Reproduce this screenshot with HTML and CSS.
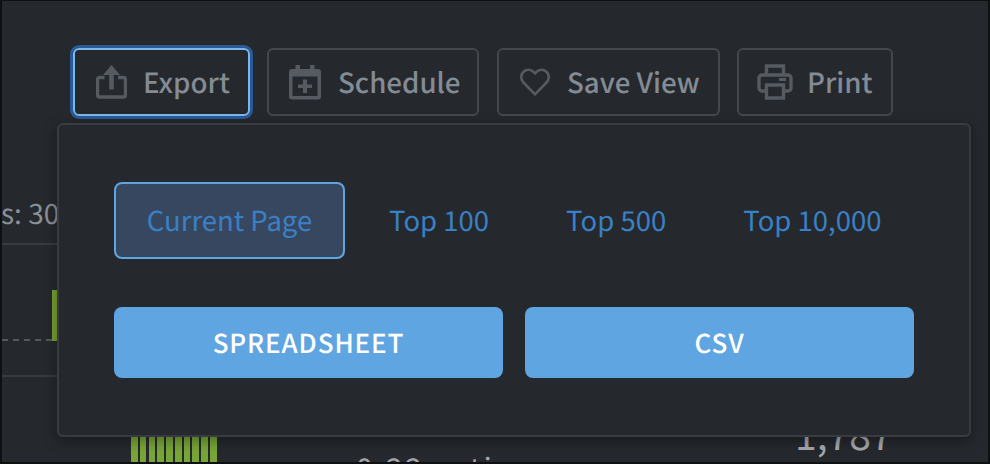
FILE: index.html
```html
<!DOCTYPE html>
<html lang="en">
<head>
<meta charset="utf-8">
<title>Export</title>
<link rel="stylesheet" href="styles.css">
</head>
<body>
<div class="frame">
  <div class="behind">
    <span class="stat">s: 30</span>
    <div class="rule rule-a"></div>
    <div class="rule rule-b"></div>
    <div class="dash"></div>
    <div class="bar-one"></div>
    <div class="bars"><i></i><i></i><i></i><i></i><i></i><i></i><i></i><i></i><i></i><i></i></div>
    <span class="frag">0.22 ratio</span>
    <span class="total">1,787</span>
  </div>
  <div class="toolbar">
    <button class="tool tool-export">
      <svg class="icon" width="31" height="34" viewBox="0 0 31 34"><path d="M8.500 12.500H3.500a2 2 0 0 0-2 2V30a2 2 0 0 0 2 2h24a2 2 0 0 0 2-2V14.500a2 2 0 0 0-2-2H22" fill="none" stroke="currentColor" stroke-width="3.400"/><path d="M15.500 0 24 10H17.800V24.500H13.200V10H7Z" fill="currentColor"/></svg>
      <span>Export</span>
    </button>
    <button class="tool tool-schedule">
      <svg class="icon" width="32" height="35" viewBox="0 0 32 35"><path d="M3 4H6.500V0H11V4H21V0H25.500V4H29A3 3 0 0 1 32 7V31.500A3 3 0 0 1 29 34.500H3A3 3 0 0 1 0 31.500V7A3 3 0 0 1 3 4ZM3.500 11.500V31H28.500V11.500Z" fill="currentColor" fill-rule="evenodd"/><path d="M14 14.500H18V19.500H23V23H18V28H14V23H9V19.500H14Z" fill="currentColor"/></svg>
      <span>Schedule</span>
    </button>
    <button class="tool tool-save">
      <svg class="icon" width="30" height="28" viewBox="0 0 30 28"><path d="M15 26.300 3.500 14.500C0.500 11.500 0.500 6.500 3.500 3.800 6.500 1 11 1.200 13.500 3.800L15 5.500 16.500 3.800C19 1.200 23.500 1 26.500 3.800 29.500 6.500 29.500 11.500 26.500 14.500Z" fill="none" stroke="currentColor" stroke-width="2.600" stroke-linejoin="round"/></svg>
      <span>Save View</span>
    </button>
    <button class="tool tool-print">
      <svg class="icon" width="36" height="36" viewBox="0 0 36 36"><path d="M9.500 11V2H26.500V11M9.500 27H5A3 3 0 0 1 2 24V14A3 3 0 0 1 5 11H31A3 3 0 0 1 34 14V24A3 3 0 0 1 31 27H26.500M9.500 21H26.500V34H9.500Z" fill="none" stroke="currentColor" stroke-width="3.400"/><rect x="22" y="14" width="7" height="3" fill="currentColor"/></svg>
      <span>Print</span>
    </button>
  </div>
  <div class="popover">
    <div class="ranges">
      <button class="range range-current">Current Page</button>
      <button class="range range-100">Top 100</button>
      <button class="range range-500">Top 500</button>
      <button class="range range-10k">Top 10,000</button>
    </div>
    <div class="actions">
      <button class="action">SPREADSHEET</button>
      <button class="action">CSV</button>
    </div>
  </div>
</div>
</body>
</html>
```
FILE: styles.css
```css
* { box-sizing: border-box; }
html, body { margin: 0; padding: 0; }
body {
  width: 990px;
  height: 464px;
  background: #0f1012;
  overflow: hidden;
  font-family: "Noto Sans CJK SC", "Noto Sans", sans-serif;
  text-rendering: geometricPrecision;
}
button { font-family: inherit; cursor: pointer; text-rendering: geometricPrecision; }
.frame {
  position: relative;
  width: 986px;
  height: 461px;
  margin: 1px 2px 2px;
  background: #25282d;
  overflow: hidden;
  padding: 47px 0 0 71px;
}
.toolbar { display: flex; position: relative; }
.tool {
  display: flex;
  align-items: center;
  height: 68px;
  background: transparent;
  border: 2px solid #44484e;
  border-radius: 6px;
  color: #565b62;
  padding: 0;
}
.tool span {
  font-size: 27.700px;
  font-weight: 500;
  color: #838b94;
  line-height: 1;
}
.tool-export {
  width: 177px;
  margin-right: 17px;
  padding-left: 21px;
  border: 2px solid #7cb7ec;
  box-shadow: 0 0 0 3px #2a5a96;
}
.tool-export span { margin-left: 16px; }
.tool-schedule { width: 212px; margin-right: 18px; padding-left: 20px; }
.tool-schedule span { margin-left: 17px; }
.tool-save { width: 223px; margin-right: 17px; padding-left: 21px; }
.tool-save span { margin-left: 17px; }
.tool-print { width: 156px; padding-left: 18px; }
.tool-print span { margin-left: 14px; }
.popover {
  position: absolute;
  left: 55px;
  top: 122px;
  width: 914px;
  height: 314px;
  background: #25282d;
  border: 2px solid #383c42;
  border-radius: 6px;
  box-shadow: 0 4px 14px rgba(0, 0, 0, 0.35);
  padding: 57px 55px 0;
}
.ranges { display: flex; height: 77px; }
.range {
  background: transparent;
  border: 0;
  color: #3a80c6;
  font-size: 27.500px;
  line-height: 1;
  padding: 0 0 2px;
  border-radius: 8px;
}
.range-current {
  width: 231px;
  background: #37475f;
  border: 2px solid #5fa5e2;
  color: #3a80c6;
}
.range-100 { margin-left: 44px; }
.range-500 { margin-left: 77px; }
.range-10k { margin-left: 77px; }
.actions { display: flex; gap: 22px; margin-top: 48px; }
.action {
  width: 389px;
  height: 71px;
  background: #5fa5e2;
  border: 0;
  border-radius: 8px;
  color: #fff;
  font-size: 26px;
  font-weight: 500;
  letter-spacing: 0.9px;
  padding: 0;
}
.behind { position: absolute; inset: 0; }
.stat {
  position: absolute;
  left: -1px;
  top: 195px;
  font-size: 28px;
  line-height: 34px;
  color: #8b9096;
}
.rule { position: absolute; left: 0; width: 56px; height: 2px; background: #383b40; }
.rule-a { top: 242px; }
.rule-b { top: 374px; }
.dash { position: absolute; left: 0; top: 338px; width: 50px; border-top: 2px dashed #55595e; }
.bar-one { position: absolute; left: 50px; top: 289px; width: 6px; height: 51px; background: #76a030; }
.bars { position: absolute; left: 129px; top: 430px; display: flex; gap: 2.100px; height: 31px; }
.bars i { display: block; width: 6.700px; background: #78a636; }
.frag {
  position: absolute;
  left: 354px;
  top: 451px;
  font-size: 30px;
  line-height: 30px;
  letter-spacing: 2.500px;
  word-spacing: 4px;
  color: #a4a8ad;
}
.total {
  position: absolute;
  left: 793px;
  top: 411px;
  font-size: 39px;
  font-weight: 400;
  line-height: 44px;
  letter-spacing: 0;
  color: #a4a8ad;
}
```
